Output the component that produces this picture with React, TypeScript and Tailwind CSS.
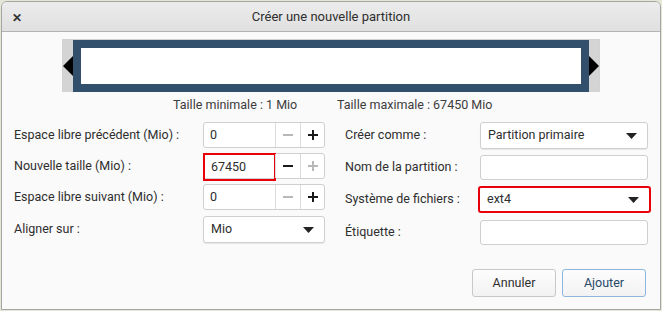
import React from "react";

const font = { fontFamily: "Roboto, 'Noto Sans', sans-serif" };

function SpinBox({ value, minusOn, plusOn, focused }: { value: string; minusOn: boolean; plusOn: boolean; focused?: boolean }) {
  return (
    <div className="relative flex h-[26px] w-[122px] rounded-[3px] border border-[#cfcfcf] bg-white">
      <div className={`flex w-[71px] items-center pl-[6px] text-[12.5px] text-[#2e2e2e] ${focused ? "-m-px h-[28px] w-[73px] border-2 border-[#e8000b] pl-[6px]" : ""}`}>
        {value}
      </div>
      <div className="flex w-[25px] items-center justify-center border-l border-[#dcdcdc]">
        <div className={`h-[2px] w-[10px] ${minusOn ? "bg-[#1a1a1a]" : "bg-[#b8b8b8]"}`} />
      </div>
      <div className="relative flex flex-1 items-center justify-center border-l border-[#dcdcdc]">
        <div className={`h-[2px] w-[10px] ${plusOn ? "bg-[#1a1a1a]" : "bg-[#b8b8b8]"}`} />
        <div className={`absolute h-[10px] w-[2px] ${plusOn ? "bg-[#1a1a1a]" : "bg-[#b8b8b8]"}`} />
      </div>
    </div>
  );
}

function Combo({ value, width, red }: { value: string; width: string; red?: boolean }) {
  return (
    <div
      className={`flex h-[27px] ${width} items-center justify-between rounded-[3px] pl-[7px] pr-[10px] text-[12.5px] text-[#2e2e2e] ${
        red ? "border-2 border-[#e8000b] bg-white" : "border border-[#cfcfcf] bg-white shadow-[0_1px_1px_rgba(0,0,0,0.08)]"
      }`}
    >
      <span>{value}</span>
      <svg width="11" height="6" viewBox="0 0 11 6">
        <path d="M0 0 L11 0 L5.5 6 Z" fill="#222" />
      </svg>
    </div>
  );
}

function Entry() {
  return <div className="h-[25px] w-[168px] rounded-[3px] border border-[#cfcfcf] bg-white" />;
}

export default function App() {
  return (
    <div className="h-[311px] w-[662px] bg-[#e6e6d6] pl-px pt-px" style={font}>
      <div className="flex h-[309px] w-[660px] flex-col overflow-hidden rounded-t-[6px] border border-[#a4a4a4] bg-[#fafafa]">
        {/* title bar */}
        <div className="relative flex h-[30px] shrink-0 items-center justify-center border-b border-[#b3b3b3] bg-gradient-to-b from-[#ececec] to-[#e0e0e0]">
          <span className="absolute left-[10px] top-[7px] text-[12px] font-bold text-[#333]">✕</span>
          <span className="text-[13px] text-[#2e2e2e]">Créer une nouvelle partition</span>
        </div>

        {/* partition bar */}
        <div className="flex justify-center pt-[7px]">
          <div className="relative flex h-[53px] w-[538px] items-center justify-center border border-[#d2d2d2] bg-[#d4d4d4]">
            <svg className="absolute left-0 top-[16px]" width="10" height="20" viewBox="0 0 10 20">
              <path d="M10 0 L0 10 L10 20 Z" fill="#000" />
            </svg>
            <div className="h-[52px] w-[516px] border-[8px] border-[#324f6b] bg-white" />
            <svg className="absolute right-0 top-[16px]" width="10" height="20" viewBox="0 0 10 20">
              <path d="M0 0 L10 10 L0 20 Z" fill="#000" />
            </svg>
          </div>
        </div>

        <div className="flex h-[22px] items-center pl-[171px] pt-[4px] text-[12.5px] text-[#3c3c3c]">
          <span className="w-[164px]">Taille minimale : 1 Mio</span>
          <span>Taille maximale : 67450 Mio</span>
        </div>

        {/* form */}
        <div className="mt-[8px] flex text-[12.5px] text-[#2e2e2e]">
          <div className="flex w-[330px] flex-col gap-[5px] pl-[12px]">
            <div className="flex items-center">
              <span className="w-[189px]">Espace libre précédent (Mio) :</span>
              <SpinBox value="0" minusOn={false} plusOn />
            </div>
            <div className="flex items-center">
              <span className="w-[189px]">Nouvelle taille (Mio) :</span>
              <SpinBox value="67450" minusOn plusOn={false} focused />
            </div>
            <div className="flex items-center">
              <span className="w-[189px]">Espace libre suivant (Mio) :</span>
              <SpinBox value="0" minusOn={false} plusOn />
            </div>
            <div className="mt-[1px] flex items-center">
              <span className="w-[189px]">Aligner sur :</span>
              <Combo value="Mio" width="w-[122px]" />
            </div>
          </div>

          <div className="flex flex-col gap-[6px] pl-[13px]">
            <div className="flex items-center">
              <span className="w-[135px]">Créer comme :</span>
              <Combo value="Partition primaire" width="w-[168px]" />
            </div>
            <div className="flex items-center">
              <span className="w-[135px]">Nom de la partition :</span>
              <Entry />
            </div>
            <div className="flex items-center">
              <span className="w-[135px]">Système de fichiers :</span>
              <div className="-ml-[2px]">
                <Combo value="ext4" width="w-[173px]" red />
              </div>
            </div>
            <div className="mt-[1px] flex items-center">
              <span className="w-[135px]">Étiquette :</span>
              <Entry />
            </div>
          </div>
        </div>

        {/* buttons */}
        <div className="mt-auto flex justify-end gap-[6px] pb-[12px] pr-[14px]">
          <button className="h-[28px] w-[84px] rounded-[3px] border border-[#c8c8c8] bg-gradient-to-b from-[#fdfdfd] to-[#f2f2f2] text-[12.5px] text-[#2e2e2e]">
            Annuler
          </button>
          <button className="h-[28px] w-[84px] rounded-[3px] border border-[#8fb6dc] bg-gradient-to-b from-[#fdfdfd] to-[#f2f2f2] text-[12.5px] text-[#27496b]">
            Ajouter
          </button>
        </div>
      </div>
    </div>
  );
}
